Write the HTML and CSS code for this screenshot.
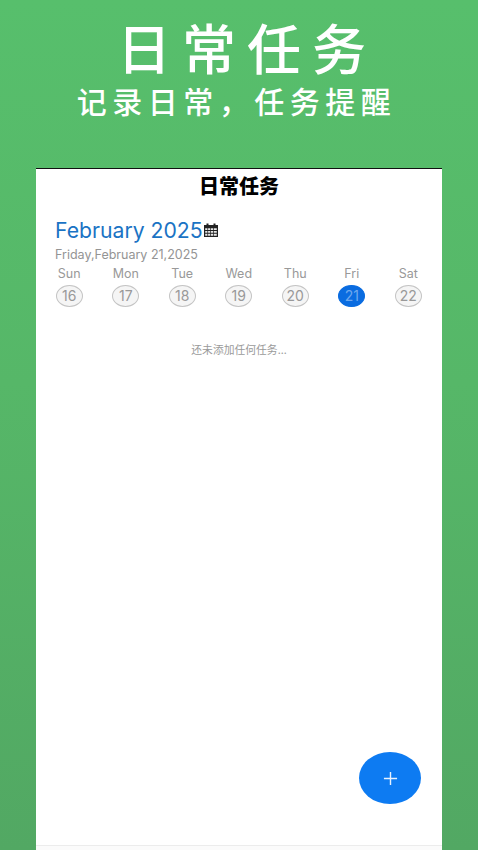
FILE: index.html
```html
<!DOCTYPE html>
<html lang="zh">
<head>
<meta charset="utf-8">
<title>日常任务</title>
<link rel="stylesheet" href="styles.css">
</head>
<body>
<main class="poster">
  <header class="hero">
    <h1 class="hero-title">日常任务</h1>
    <p class="hero-sub">记录日常，任务提醒</p>
  </header>
  <section class="phone">
    <h2 class="app-title">日常任务</h2>
    <div class="content">
      <div class="month-row">
        <span class="month">February 2025</span>
        <svg class="cal-icon" viewBox="0 0 16 16" aria-hidden="true">
          <path fill="#222" d="M1 3h2.5V1.5h2V3h5V1.5h2V3H15v12H1z"/>
          <path fill="#e8e8e8" d="M2.200 6.200h2.200v1.800H2.200zM5.100 6.200h2.200v1.800H5.100zM8 6.200h2.200v1.800H8zM10.900 6.200h2.900v1.800h-2.900zM2.200 9h2.200v1.800H2.200zM5.100 9h2.200v1.800H5.100zM8 9h2.200v1.800H8zM10.900 9h2.900v1.800h-2.900zM2.200 11.800h2.200v1.900H2.200zM5.100 11.800h2.200v1.900H5.100zM8 11.800h2.200v1.900H8zM10.900 11.800h2.900v1.900h-2.900z"/>
        </svg>
      </div>
      <p class="today">Friday,February 21,2025</p>
      <ul class="week">
        <li class="day"><span class="dow">Sun</span><span class="num">16</span></li>
        <li class="day"><span class="dow">Mon</span><span class="num">17</span></li>
        <li class="day"><span class="dow">Tue</span><span class="num">18</span></li>
        <li class="day"><span class="dow">Wed</span><span class="num">19</span></li>
        <li class="day"><span class="dow">Thu</span><span class="num">20</span></li>
        <li class="day"><span class="dow">Fri</span><span class="num active">21</span></li>
        <li class="day"><span class="dow">Sat</span><span class="num">22</span></li>
      </ul>
      <p class="empty">还未添加任何任务...</p>
    </div>
    <button class="fab" type="button" aria-label="添加">
      <svg class="fab-icon" viewBox="0 0 16 16" aria-hidden="true"><path d="M8 1v14M1 8h14"/></svg>
    </button>
    <div class="tabbar"></div>
  </section>
</main>
</body>
</html>
```
FILE: styles.css
```css
* { box-sizing: border-box; }
html, body { margin: 0; padding: 0; }
body { width: 478px; height: 850px; overflow: hidden; font-family: Inter, "Noto Sans", "Noto Sans CJK SC", sans-serif; }
.poster {
  width: 478px; height: 850px; display: flex; flex-direction: column; align-items: center;
  background: linear-gradient(180deg, #57bf6c 0%, #56b768 45%, #52a863 100%);
}
.hero { height: 168px; padding-top: 16px; text-align: center; color: #fff; width: 100%; flex: none; }
.hero-title {
  margin: 0; font-family: "Noto Sans CJK SC", sans-serif; font-weight: 500;
  font-size: 54px; line-height: 62px; letter-spacing: 11px; padding-left: 16px;
}
.hero-sub {
  margin: 3px 0 0; font-family: "Noto Sans CJK SC", sans-serif; font-weight: 500;
  font-size: 30px; line-height: 38px; letter-spacing: 5.500px; padding-right: 5px;
}
.phone {
  position: relative; width: 406px; height: 682px; flex: none; background: #fff;
  border-top: 1.500px solid #111; display: flex; flex-direction: column;
}
.app-title {
  margin: 0; text-align: center; font-family: "Noto Sans CJK SC", sans-serif; font-weight: 900;
  font-size: 20px; line-height: 34px; color: #000; height: 35px;
}
.content { flex: 1; padding: 13px 14px 0 19px; }
.month-row { display: flex; align-items: center; height: 26px; }
.month { font-size: 21.200px; color: #1a73c4; line-height: 26px; }
.cal-icon { width: 16px; height: 16px; flex: none; margin-top: -1px; }
.today { margin: 3px 0 0; font-size: 12.500px; line-height: 18px; color: #949494; }
.week { list-style: none; margin: 1px 0 0 -14px; padding: 0; display: flex; width: 396px; }
.day { width: 56.500px; display: flex; flex-direction: column; align-items: center; flex: none; }
.dow { font-size: 12.500px; line-height: 18px; color: #999; }
.num {
  margin-top: 2px; width: 27px; height: 22px; border-radius: 50%; border: 1px solid #c4c4c4; background: #f5f5f5;
  font-size: 14px; line-height: 20px; color: #999; text-align: center;
}
.num.active { background: #0a6ce0; border-color: #0a6ce0; color: #6ea8ee; }
.empty { margin: 34px 0 0; text-align: center; font-family: "Noto Sans CJK SC", sans-serif; font-size: 10.800px; line-height: 16px; color: #9a9a9a; padding-right: 5px; }
.fab {
  position: absolute; left: 323px; top: 583px; width: 62px; height: 52px; padding: 0; border: 0; border-radius: 50%;
  background: #0d7bf2; display: flex; align-items: center; justify-content: center;
}
.fab-icon { width: 15px; height: 15px; fill: none; stroke: #e8f2ff; stroke-width: 1.500; }
.tabbar { height: 5px; flex: none; border-top: 1px solid #ececec; background: #fbfbfb; }
```
